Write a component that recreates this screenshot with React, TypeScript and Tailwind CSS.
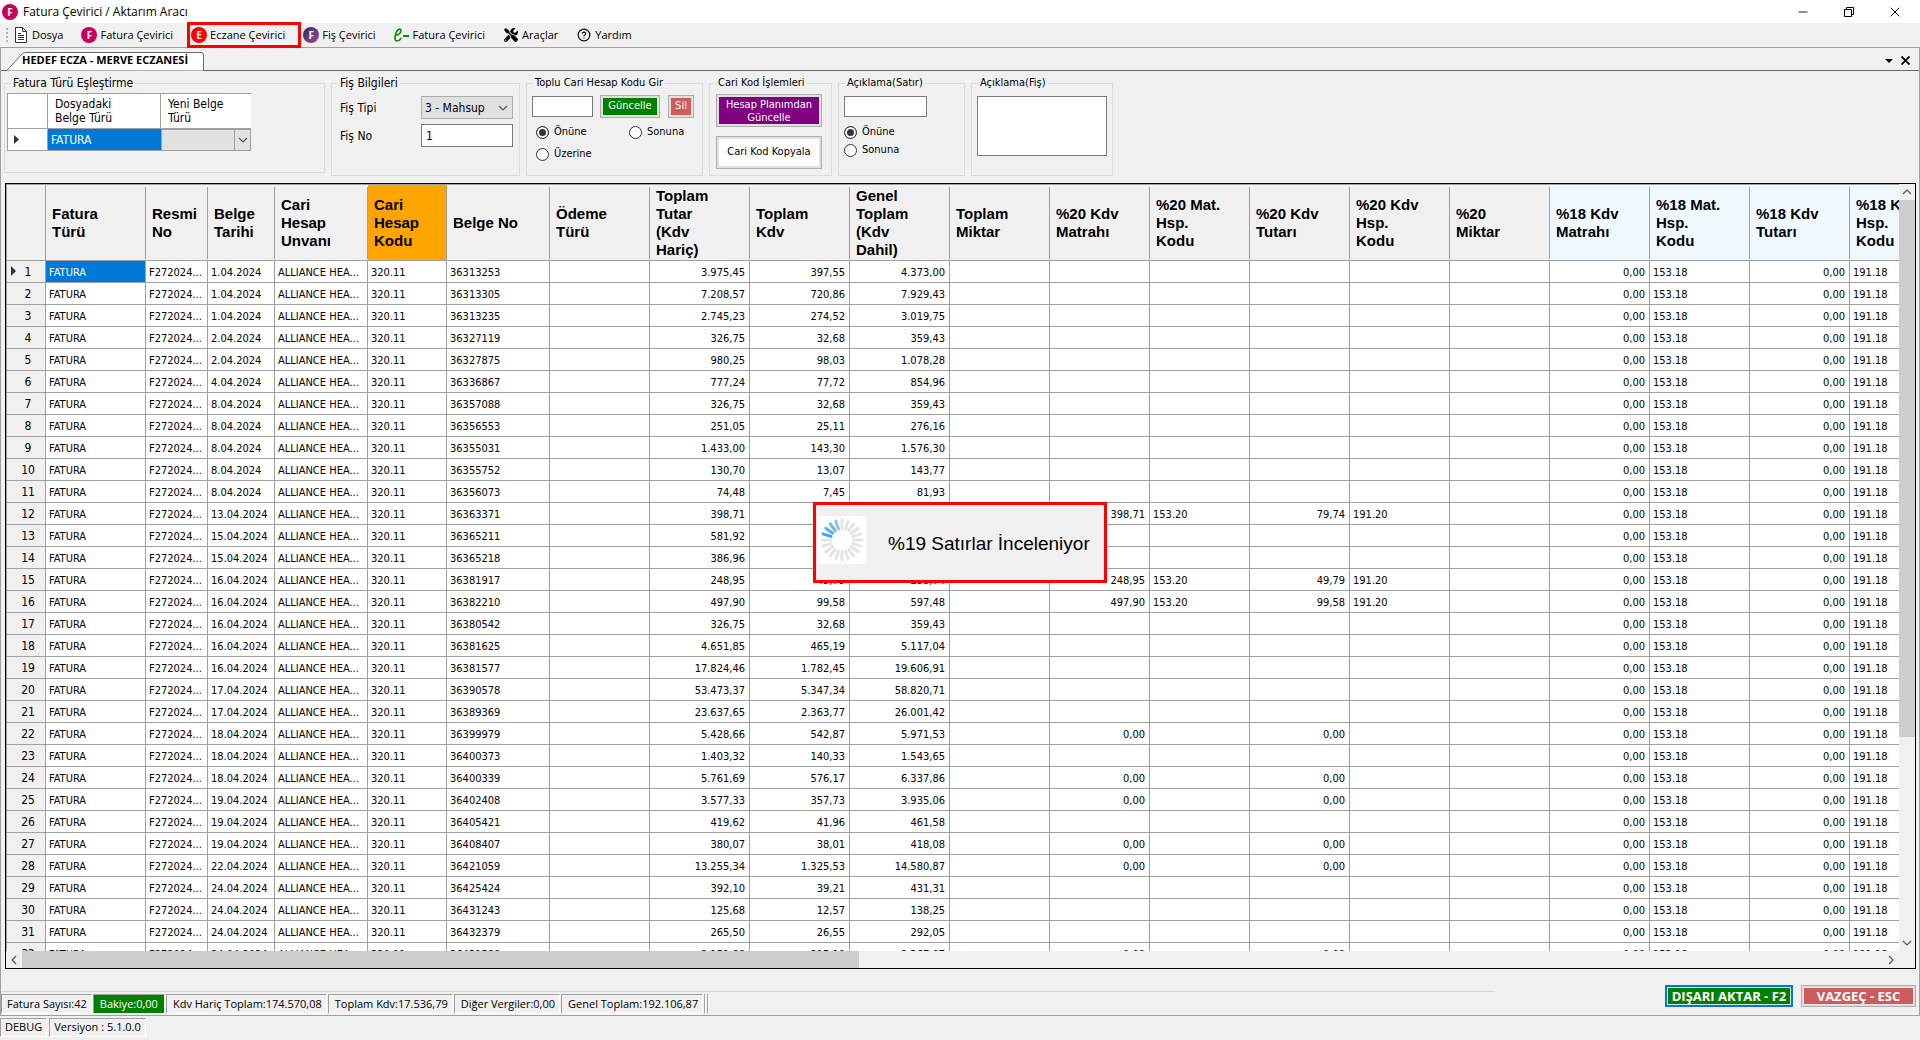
import React, { useState } from 'react';
import { FaTools } from 'react-icons/fa';
import { CircleHelp, X, Minus } from 'lucide-react';
import clsx from 'clsx';

interface Column {
  key: string;
  title: string;
  width: string;
  numeric?: boolean;
  tone?: string;
}

const COLUMNS: Column[] = [
  { key: 'tur', title: 'Fatura\nTürü', width: 'w-[100px]' },
  { key: 'resmiNo', title: 'Resmi\nNo', width: 'w-[62px]' },
  { key: 'tarih', title: 'Belge\nTarihi', width: 'w-[67px]' },
  { key: 'unvan', title: 'Cari\nHesap\nUnvanı', width: 'w-[93px]' },
  { key: 'cariKod', title: 'Cari\nHesap\nKodu', width: 'w-[79px]', tone: 'bg-[#ffa500]' },
  { key: 'belgeNo', title: 'Belge No', width: 'w-[103px]' },
  { key: 'odeme', title: 'Ödeme\nTürü', width: 'w-[100px]' },
  { key: 'tutar', title: 'Toplam\nTutar\n(Kdv\nHariç)', width: 'w-[100px]', numeric: true },
  { key: 'kdv', title: 'Toplam\nKdv', width: 'w-[100px]', numeric: true },
  { key: 'genel', title: 'Genel\nToplam\n(Kdv\nDahil)', width: 'w-[100px]', numeric: true },
  { key: 'miktar', title: 'Toplam\nMiktar', width: 'w-[100px]', numeric: true },
  { key: 'matrah20', title: '%20 Kdv\nMatrahı', width: 'w-[100px]', numeric: true },
  { key: 'matKod20', title: '%20 Mat.\nHsp.\nKodu', width: 'w-[100px]' },
  { key: 'kdv20', title: '%20 Kdv\nTutarı', width: 'w-[100px]', numeric: true },
  { key: 'kdvKod20', title: '%20 Kdv\nHsp.\nKodu', width: 'w-[100px]' },
  { key: 'miktar20', title: '%20\nMiktar', width: 'w-[100px]', numeric: true },
  { key: 'matrah18', title: '%18 Kdv\nMatrahı', width: 'w-[100px]', numeric: true, tone: 'bg-[#f0f8ff]' },
  { key: 'matKod18', title: '%18 Mat.\nHsp.\nKodu', width: 'w-[100px]', tone: 'bg-[#f0f8ff]' },
  { key: 'kdv18', title: '%18 Kdv\nTutarı', width: 'w-[100px]', numeric: true, tone: 'bg-[#f0f8ff]' },
  { key: 'kdvKod18', title: '%18 Kdv\nHsp.\nKodu', width: 'w-[100px]', tone: 'bg-[#f0f8ff]' },
];

// tarih, belge no, tutar, kdv, genel toplam, [%20 matrah, %20 kdv]
const INVOICES: string[][] = [
  ['1.04.2024', '36313253', '3.975,45', '397,55', '4.373,00'],
  ['1.04.2024', '36313305', '7.208,57', '720,86', '7.929,43'],
  ['1.04.2024', '36313235', '2.745,23', '274,52', '3.019,75'],
  ['2.04.2024', '36327119', '326,75', '32,68', '359,43'],
  ['2.04.2024', '36327875', '980,25', '98,03', '1.078,28'],
  ['4.04.2024', '36336867', '777,24', '77,72', '854,96'],
  ['8.04.2024', '36357088', '326,75', '32,68', '359,43'],
  ['8.04.2024', '36356553', '251,05', '25,11', '276,16'],
  ['8.04.2024', '36355031', '1.433,00', '143,30', '1.576,30'],
  ['8.04.2024', '36355752', '130,70', '13,07', '143,77'],
  ['8.04.2024', '36356073', '74,48', '7,45', '81,93'],
  ['13.04.2024', '36363371', '398,71', '79,74', '478,45', '398,71', '79,74'],
  ['15.04.2024', '36365211', '581,92', '58,19', '640,11'],
  ['15.04.2024', '36365218', '386,96', '38,70', '425,66'],
  ['16.04.2024', '36381917', '248,95', '49,79', '298,74', '248,95', '49,79'],
  ['16.04.2024', '36382210', '497,90', '99,58', '597,48', '497,90', '99,58'],
  ['16.04.2024', '36380542', '326,75', '32,68', '359,43'],
  ['16.04.2024', '36381625', '4.651,85', '465,19', '5.117,04'],
  ['16.04.2024', '36381577', '17.824,46', '1.782,45', '19.606,91'],
  ['17.04.2024', '36390578', '53.473,37', '5.347,34', '58.820,71'],
  ['17.04.2024', '36389369', '23.637,65', '2.363,77', '26.001,42'],
  ['18.04.2024', '36399979', '5.428,66', '542,87', '5.971,53', '0,00', '0,00'],
  ['18.04.2024', '36400373', '1.403,32', '140,33', '1.543,65'],
  ['18.04.2024', '36400339', '5.761,69', '576,17', '6.337,86', '0,00', '0,00'],
  ['19.04.2024', '36402408', '3.577,33', '357,73', '3.935,06', '0,00', '0,00'],
  ['19.04.2024', '36405421', '419,62', '41,96', '461,58'],
  ['19.04.2024', '36408407', '380,07', '38,01', '418,08', '0,00', '0,00'],
  ['22.04.2024', '36421059', '13.255,34', '1.325,53', '14.580,87', '0,00', '0,00'],
  ['24.04.2024', '36425424', '392,10', '39,21', '431,31'],
  ['24.04.2024', '36431243', '125,68', '12,57', '138,25'],
  ['24.04.2024', '36432379', '265,50', '26,55', '292,05'],
  ['24.04.2024', '36431588', '2.151,88', '215,19', '2.367,07', '0,00', '0,00'],
];

const ROWS: Record<string, string>[] = INVOICES.map(([tarih, belgeNo, tutar, kdv, genel, matrah20 = '', kdv20 = '']) => {
  const has20 = matrah20 !== '' && matrah20 !== '0,00';
  return {
    tur: 'FATURA',
    resmiNo: 'F272024...',
    tarih,
    unvan: 'ALLIANCE HEA...',
    cariKod: '320.11',
    belgeNo,
    tutar,
    kdv,
    genel,
    matrah20,
    kdv20,
    matKod20: has20 ? '153.20' : '',
    kdvKod20: has20 ? '191.20' : '',
    matrah18: '0,00',
    matKod18: '153.18',
    kdv18: '0,00',
    kdvKod18: '191.18',
  };
});

const LetterIcon: React.FC<{ letter: string; className: string }> = ({ letter, className }) => (
  <span className={clsx('flex size-4 shrink-0 items-center justify-center rounded-full font-["Open_Sans",sans-serif] text-[10px] leading-none font-bold text-white', className)}>
    {letter}
  </span>
);

const DocIcon = () => (
  <svg viewBox="0 0 16 16" className="size-4" fill="none" stroke="#333">
    <path d="M2.5 .5h7l4 4v11h-11z" fill="#fff" />
    <path d="M9.5 .5v4h4M5 6.5h3M5 8.5h6M5 10.5h6M5 12.5h6" />
  </svg>
);

const EInvoiceIcon = () => (
  <svg viewBox="0 0 16 16" className="size-4" fill="none" stroke="#0a8a0a" strokeWidth="1.6" strokeLinecap="round">
    <path d="M2.5 8.5C6 8 8.5 5.500 8 3.200C7.500 1 4.500 2 3 6C1.500 10 1.500 14 4 14C5.800 14 7 12.800 8 11.500" />
    <path d="M10 9h6" strokeWidth="2" strokeLinecap="butt" />
  </svg>
);

const Chevron: React.FC<{ className?: string }> = ({ className }) => (
  <svg viewBox="0 0 10 10" className={clsx('size-2.5', className)} fill="none" stroke="#555" strokeWidth="1.2">
    <path d="M1 3l4 4 4-4" />
  </svg>
);

const MENU = [
  { label: 'Dosya', icon: <DocIcon /> },
  { label: 'Fatura Çevirici', icon: <LetterIcon letter="F" className="bg-[#c8005f]" /> },
  { label: 'Eczane Çevirici', icon: <LetterIcon letter="E" className="bg-[#ff0000]" />, marked: true },
  { label: 'Fiş Çevirici', icon: <LetterIcon letter="F" className="bg-linear-to-br from-[#1d2a6b] to-[#b0408a]" /> },
  { label: 'Fatura Çevirici', icon: <EInvoiceIcon /> },
  { label: 'Araçlar', icon: <FaTools className="size-3.5" /> },
  { label: 'Yardım', icon: <CircleHelp className="size-3.5" /> },
];

const GroupBox: React.FC<{ title: string; className?: string; children: React.ReactNode }> = ({ title, className, children }) => (
  <fieldset className={clsx('min-w-0 shrink-0 border border-[#dcdcdc]', className)}>
    <legend className="ml-1.5 px-0.5 leading-4 whitespace-nowrap">{title}</legend>
    {children}
  </fieldset>
);

const FormButton: React.FC<{ className?: string; fill: string; children: React.ReactNode }> = ({ className, fill, children }) => (
  <button type="button" className={clsx('flex shrink-0 border border-[#adadad] bg-[#e1e1e1] p-0.5', className)}>
    <span className={clsx('flex flex-1 items-center justify-center self-stretch text-center whitespace-nowrap', fill)}>{children}</span>
  </button>
);

const Radio: React.FC<{ name: string; label: string; checked: boolean; onChange: () => void }> = ({ name, label, checked, onChange }) => (
  <label className="flex items-center gap-[5px] leading-[14px]">
    <input
      type="radio"
      name={name}
      checked={checked}
      onChange={onChange}
      className="size-[13px] appearance-none rounded-full border border-[#333] bg-white checked:bg-[#333] checked:shadow-[inset_0_0_0_2px_white]"
    />
    {label}
  </label>
);

const StatusCell: React.FC<{ className?: string; children?: React.ReactNode }> = ({ className, children }) => (
  <span className={clsx('flex items-center border border-t-[#a0a0a0] border-r-white border-b-white border-l-[#a0a0a0] whitespace-nowrap', className)}>
    {children}
  </span>
);

const Spinner = () => (
  <svg viewBox="0 0 48 48" className="mt-[11px] size-12 shrink-0 self-start bg-white" strokeWidth="3" strokeLinecap="round">
    {Array.from({ length: 20 }, (_, i) => {
      const blue = i >= 16;
      return (
        <path
          key={i}
          d="M24 12.500V4"
          stroke={blue ? '#4aa3df' : '#e4e4e4'}
          opacity={blue ? 1 - (i - 16) * 0.12 : 1}
          transform={`rotate(${i * 18} 24 24)`}
        />
      );
    })}
  </svg>
);

const input = 'border border-[#7a7a7a] bg-white px-1 outline-none';

const Toolbar = () => {
  const [kodYeri, setKodYeri] = useState('Önüne');
  const [aciklamaYeri, setAciklamaYeri] = useState('Önüne');

  return (
    <div className="flex h-[101px] gap-1.5 pl-[3px]">
      <GroupBox title="Fatura Türü Eşleştirme" className="mb-[3px] w-[321px] text-[12px]">
        <table className="mt-0.5 ml-0.5 w-[244px] table-fixed border-separate border-spacing-0 border-t border-l border-[#a0a0a0] text-left leading-[14px]">
          <thead>
            <tr className="h-[35px] bg-white">
              <th scope="col" aria-label="Seçim" className="w-10 border-r border-b border-[#a0a0a0]" />
              <th scope="col" className="w-[113px] border-r border-b border-[#a0a0a0] pl-[7px] font-normal">Dosyadaki<br />Belge Türü</th>
              <th scope="col" className="border-b border-[#a0a0a0] pl-[7px] font-normal">Yeni Belge<br />Türü</th>
            </tr>
          </thead>
          <tbody>
            <tr className="h-[22px]">
              <td className="border-r border-b border-[#a0a0a0] bg-white">
                <svg viewBox="0 0 5 9" className="ml-1.5 h-[9px] w-[5px]"><path d="M0 0l5 4.500L0 9z" fill="#333" /></svg>
              </td>
              <td className="border-b border-[#a0a0a0] bg-[#0078d7] pl-[3px] text-white">FATURA</td>
              <td className="p-0">
                <div className="relative h-[22px] border border-[#a0a0a0] bg-[#e1e1e1]">
                  <select aria-label="Yeni Belge Türü" className="size-full appearance-none outline-none"><option value="" /></select>
                  <span className="pointer-events-none absolute inset-y-0 right-0 flex w-4 items-center justify-center border-l border-[#a0a0a0]"><Chevron /></span>
                </div>
              </td>
            </tr>
          </tbody>
        </table>
      </GroupBox>

      <GroupBox title="Fiş Bilgileri" className="w-[189px] text-[12px]">
        <div className="grid grid-cols-[81px_92px] items-center gap-y-[5px] pt-[5px] pl-2">
          <label htmlFor="fis-tipi">Fiş Tipi</label>
          <div className="relative h-[23px] border border-[#adadad] bg-[#e1e1e1]">
            <select id="fis-tipi" className="size-full appearance-none pl-[3px] outline-none"><option>3 - Mahsup</option></select>
            <Chevron className="pointer-events-none absolute top-1.5 right-1" />
          </div>
          <label htmlFor="fis-no">Fiş No</label>
          <input id="fis-no" defaultValue="1" className={clsx(input, 'h-[23px] w-full')} />
        </div>
      </GroupBox>

      <GroupBox title="Toplu Cari Hesap Kodu Gir" className="w-[177px]">
        <div className="flex items-center pt-1 pl-[5px]">
          <input aria-label="Cari hesap kodu" className={clsx(input, 'mr-[7px] h-[21px] w-[61px]')} />
          <FormButton className="mr-2 h-[23px] w-[60px]" fill="bg-[#008000] text-white">Güncelle</FormButton>
          <FormButton className="h-[23px] w-[26px]" fill="bg-[#cd5c5c] text-white">Sil</FormButton>
        </div>
        <div className="grid grid-cols-[93px_auto] items-center gap-y-2 pt-[7px] pl-[9px]">
          {['Önüne', 'Sonuna', 'Üzerine'].map(v => (
            <Radio key={v} name="kod-yeri" label={v} checked={kodYeri === v} onChange={() => setKodYeri(v)} />
          ))}
        </div>
      </GroupBox>

      <GroupBox title="Cari Kod İşlemleri" className="w-[123px]">
        <div className="flex flex-col gap-[9px] pt-[3px] pl-1.5">
          <FormButton className="h-[33px] w-[106px] leading-[13px]" fill="bg-[#800080] text-white">Hesap Planımdan<br />Güncelle</FormButton>
          <FormButton className="h-[33px] w-[106px]" fill="bg-white">Cari Kod Kopyala</FormButton>
        </div>
      </GroupBox>

      <GroupBox title="Açıklama(Satır)" className="w-[127px]">
        <div className="flex flex-col gap-1 pt-[5px] pl-[5px]">
          <input aria-label="Açıklama(Satır)" className={clsx(input, 'mb-1 h-[21px] w-[83px]')} />
          {['Önüne', 'Sonuna'].map(v => (
            <Radio key={v} name="aciklama-yeri" label={v} checked={aciklamaYeri === v} onChange={() => setAciklamaYeri(v)} />
          ))}
        </div>
      </GroupBox>

      <GroupBox title="Açıklama(Fiş)" className="w-[142px]">
        <textarea aria-label="Açıklama(Fiş)" className={clsx(input, 'mt-[5px] ml-[5px] block h-[60px] w-[130px] resize-none')} />
      </GroupBox>
    </div>
  );
};

const InvoiceGrid = () => (
  <div className="mt-[7px] mr-[3px] ml-1 grid min-h-0 flex-1 grid-cols-[minmax(0,1fr)_16px] grid-rows-[minmax(0,1fr)_17px] border border-black">
    <div className="overflow-hidden border-t border-[#a0a0a0] bg-white">
      <table className="w-[1944px] table-fixed border-separate border-spacing-0">
        <thead>
          <tr className="h-[76px] bg-[#f0f0f0]">
            <th scope="col" aria-label="Satır" className="w-10 border-r border-b border-l border-[#a0a0a0]" />
            {COLUMNS.map(col => (
              <th
                key={col.key}
                scope="col"
                className={clsx(
                  'relative border-b border-[#a0a0a0] p-0 pl-1.5 text-left font-["Liberation_Sans",Arial,sans-serif] text-[15px] leading-[18px] font-bold whitespace-pre-line',
                  'after:absolute after:top-0.5 after:right-0 after:bottom-px after:w-px after:bg-[#a0a0a0]',
                  col.width,
                  col.tone,
                )}
              >
                {col.title}
              </th>
            ))}
          </tr>
        </thead>
        <tbody>
          {ROWS.map((row, i) => (
            <tr key={row.belgeNo} className="h-[22px]">
              <th scope="row" className="relative border-r border-b border-l border-[#a0a0a0] bg-[#f0f0f0] p-0 pl-1 text-[12px] leading-4 font-normal">
                {i === 0 && (
                  <svg viewBox="0 0 5 10" className="absolute top-[5px] left-1 h-2.5 w-[5px]"><path d="M0 0l5 5-5 5z" fill="#333" /></svg>
                )}
                {i + 1}
              </th>
              {COLUMNS.map((col, c) => (
                <td
                  key={col.key}
                  className={clsx(
                    'overflow-hidden border-r border-b border-[#a0a0a0] p-0 pt-0.5 leading-4 whitespace-nowrap',
                    col.numeric ? 'pr-1 text-right' : 'pl-[3px]',
                    i === 0 && c === 0 && 'bg-[#0078d7] text-white',
                  )}
                >
                  {row[col.key]}
                </td>
              ))}
            </tr>
          ))}
        </tbody>
      </table>
    </div>

    <div className="flex flex-col">
      <span className="flex h-4 items-center justify-center"><Chevron className="rotate-180" /></span>
      <div className="flex-1"><div className="h-[73%] bg-[#cdcdcd]" /></div>
      <span className="flex h-4 items-center justify-center"><Chevron /></span>
    </div>
    <div className="flex">
      <span className="flex w-4 items-center justify-center"><Chevron className="rotate-90" /></span>
      <div className="flex-1"><div className="h-full w-[45%] bg-[#cdcdcd]" /></div>
      <span className="flex w-4 items-center justify-center"><Chevron className="-rotate-90" /></span>
    </div>
  </div>
);

export default function App() {
  return (
    <div className='relative flex h-screen flex-col overflow-hidden bg-[#f0f0f0] font-["DejaVu_Sans_Condensed","Noto_Sans",sans-serif] text-[11px] text-black'>
      {/* Title bar */}
      <header className='flex h-[23px] shrink-0 items-center bg-white px-0.5 font-["Open_Sans",sans-serif]'>
        <LetterIcon letter="F" className="bg-[#c8005f]" />
        <h1 className="ml-[5px] flex-1 text-[12px]">Fatura Çevirici / Aktarım Aracı</h1>
        <button type="button" aria-label="Küçült" className="flex w-[46px] justify-center"><Minus className="size-3.5" strokeWidth={1.5} /></button>
        <button type="button" aria-label="Geri Yükle" className="flex w-[46px] justify-center">
          <svg viewBox="0 0 10 10" className="size-2.5" fill="none" stroke="#000"><path d="M.5 2.500h7v7h-7zM2.500 2.500v-2h7v7h-2" /></svg>
        </button>
        <button type="button" aria-label="Kapat" className="flex w-[46px] justify-center"><X className="size-4" strokeWidth={1.5} /></button>
      </header>

      {/* Menu */}
      <nav className='flex h-6 shrink-0 items-center gap-[18px] pl-1.5 font-["Open_Sans",sans-serif]'>
        {MENU.map((item, i) => (
          <button key={i} type="button" className="relative flex h-full items-center gap-[3px] whitespace-nowrap">
            {i === 0 && (
              <svg viewBox="0 0 2 14" className="mr-0.5 h-3.5 w-0.5" fill="#b4b4b4"><path d="M0 0h2v2H0zM0 4h2v2H0zM0 8h2v2H0zM0 12h2v2H0z" /></svg>
            )}
            <span className="flex w-4 justify-center">{item.icon}</span>
            {item.label}
            {item.marked && <span className="absolute -inset-y-px -right-4 -left-1 border-3 border-[#ff0000]" />}
          </button>
        ))}
      </nav>

      <main className="flex min-h-0 flex-1 flex-col border border-[#a0a0a0]">
        {/* Tab strip */}
        <div className="flex h-[23px] shrink-0 items-end border-b border-[#696969]">
          <div className="relative -mb-px ml-1.5 h-[19px] w-[197px]">
            <svg viewBox="0 0 197 19" className="absolute inset-0 size-full" preserveAspectRatio="none">
              <path d="M0 18.500L14 3Q16 .5 19 .5H194Q196.500 .5 196.500 3V18.500" fill="#fff" stroke="#696969" />
            </svg>
            <button type="button" className='relative pl-[15px] font-["Open_Sans",sans-serif] leading-4 font-bold whitespace-nowrap'>HEDEF ECZA - MERVE ECZANESİ</button>
          </div>
          <div className="mb-[5px] ml-auto flex items-center gap-2 pr-[9px]">
            <svg viewBox="0 0 8 4" className="h-1 w-2"><path d="M0 0h8L4 4z" /></svg>
            <button type="button" aria-label="Sekmeyi kapat">
              <svg viewBox="0 0 9 9" className="size-[9px]" stroke="#000" strokeWidth="1.800"><path d="M.5 .5l8 8M8.500 .5l-8 8" /></svg>
            </button>
          </div>
        </div>

        <div className="flex min-h-0 flex-1 flex-col pt-1">
          <Toolbar />
          <InvoiceGrid />
        </div>

        {/* Totals and actions */}
        <div className='flex h-[46px] shrink-0 justify-between pr-[3px] font-["Open_Sans",sans-serif]'>
          <div className="w-[78%] pt-[22px]">
            <div className="border-t border-[#d5d5d5]" />
            <div className="mt-0.5 flex h-5 gap-px">
              <StatusCell className="pr-1 pl-[5px]">Fatura Sayısı:42</StatusCell>
              <StatusCell className="bg-[#008000] px-1.5 text-white">Bakiye:0,00</StatusCell>
              <StatusCell className="pr-1 pl-1.5">Kdv Hariç Toplam:174.570,08</StatusCell>
              <StatusCell className="pr-1 pl-1.5">Toplam Kdv:17.536,79</StatusCell>
              <StatusCell className="pr-1 pl-1.5">Diğer Vergiler:0,00</StatusCell>
              <StatusCell className="pr-1 pl-1.5">Genel Toplam:192.106,87</StatusCell>
              <StatusCell />
              <StatusCell />
            </div>
          </div>
          <div className="flex gap-2 pt-4 text-[13px] leading-4 font-bold text-white">
            <button type="button" className="h-[22px] w-32 border-2 border-[#0078d7] bg-[#e1e1e1] p-px">
              <span className="flex h-full items-center justify-center bg-[#008000] whitespace-nowrap">DIŞARI AKTAR - F2</span>
            </button>
            <FormButton className="h-[22px] w-[115px]" fill="bg-[#cd5c5c]">VAZGEÇ - ESC</FormButton>
          </div>
        </div>
      </main>

      <footer className='flex h-6 shrink-0 items-start gap-0.5 pt-0.5 font-["Open_Sans",sans-serif]'>
        <StatusCell className="h-[19px] px-1">DEBUG</StatusCell>
        <StatusCell className="h-[19px] px-1">Versiyon : 5.1.0.0</StatusCell>
      </footer>

      {/* Progress popup */}
      <div role="status" className="absolute top-[502px] left-1/2 flex h-[81px] w-[294px] -translate-x-1/2 items-center border-3 border-[#ff0000] bg-[#f0f0f0] pl-0.5">
        <Spinner />
        <p className='mt-1 ml-[22px] font-["Liberation_Sans",Arial,sans-serif] text-[19px] whitespace-nowrap'>%19 Satırlar İnceleniyor</p>
      </div>
    </div>
  );
}
